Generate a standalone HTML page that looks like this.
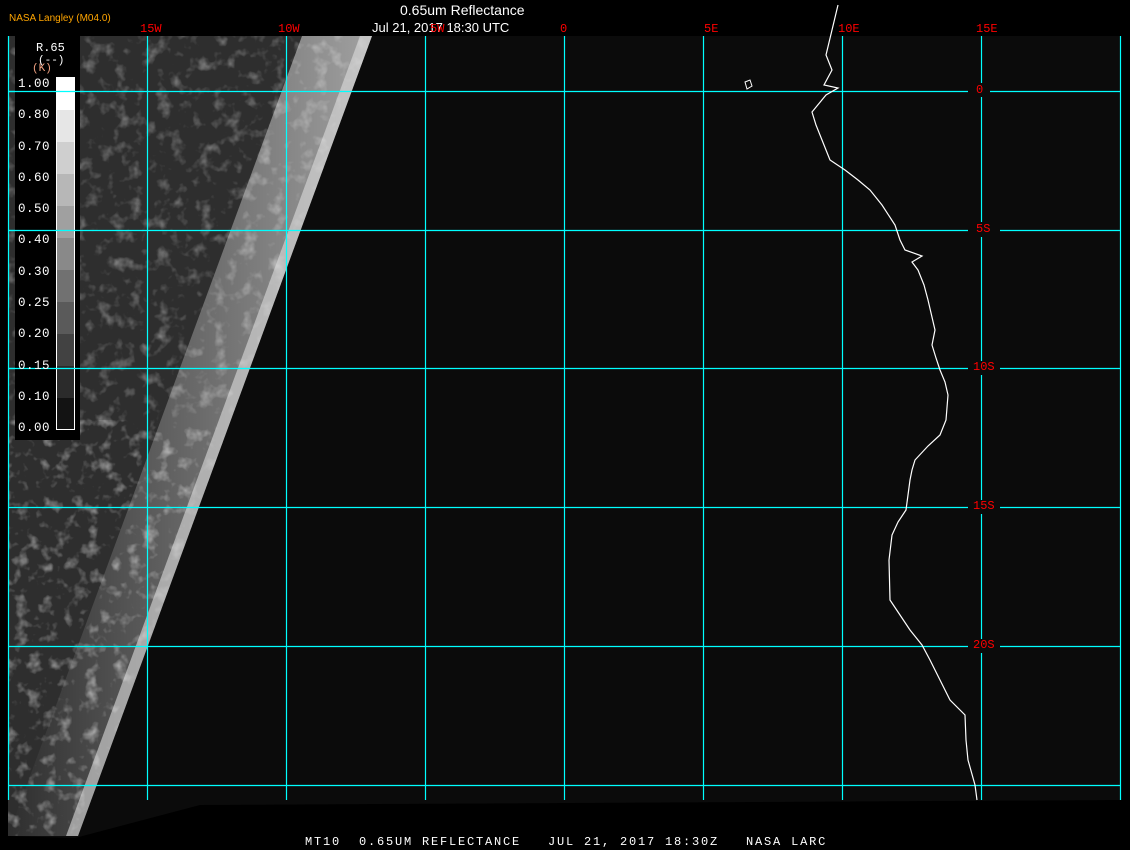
<!DOCTYPE html>
<html><head><style>
body{margin:0;background:#000;width:1130px;height:850px;overflow:hidden;position:relative;font-family:"Liberation Sans",sans-serif}
.t{position:absolute;white-space:nowrap}
.r{color:#f00;font-family:"Liberation Mono",monospace;font-size:12px}
</style></head><body>
<svg width="1130" height="850" style="position:absolute;left:0;top:0">
<defs>
<filter id="n" x="0" y="0" width="100%" height="100%">
<feTurbulence type="fractalNoise" baseFrequency="0.07" numOctaves="3" seed="4"/>
<feColorMatrix type="matrix" values="0 0 0 0 1  0 0 0 0 1  0 0 0 0 1  2 0 0 0 -1.05"/>
<feComposite in2="SourceGraphic" operator="in"/>
</filter>
<linearGradient id="e" x1="0" y1="0" x2="1" y2="0">
<stop offset="0" stop-color="#fff" stop-opacity="0"/><stop offset="1" stop-color="#fff" stop-opacity="0.55"/>
</linearGradient>
</defs>
<polygon points="8,36 1120,36 1120,800 200,805 75,838 8,836" fill="#0b0b0b"/>
<polygon points="8,36 372,36 78,836 8,836" fill="#2e2e2e"/>
<polygon points="8,36 372,36 78,836 8,836" fill="#fff" filter="url(#n)" opacity="0.5"/>
<polygon points="8,420 215,420 78,836 8,836" fill="#fff" filter="url(#n)" opacity="0.25"/>
<polygon points="372,36 78,836 8,836 302,36" fill="url(#e)"/>
<polygon points="372,36 78,836 66,836 360,36" fill="#ddd" opacity="0.6"/>
<g stroke="#00ffff" stroke-width="1.2">
<line x1="8.5" y1="36" x2="8.5" y2="800"/><line x1="147.5" y1="36" x2="147.5" y2="800"/><line x1="286.5" y1="36" x2="286.5" y2="800"/><line x1="425.5" y1="36" x2="425.5" y2="800"/><line x1="564.5" y1="36" x2="564.5" y2="800"/><line x1="703.5" y1="36" x2="703.5" y2="800"/><line x1="842.5" y1="36" x2="842.5" y2="800"/><line x1="981.5" y1="36" x2="981.5" y2="83"/><line x1="981.5" y1="97" x2="981.5" y2="222"/><line x1="981.5" y1="237" x2="981.5" y2="361"/><line x1="981.5" y1="375" x2="981.5" y2="500"/><line x1="981.5" y1="514" x2="981.5" y2="639"/><line x1="981.5" y1="653" x2="981.5" y2="800"/><line x1="1120.5" y1="36" x2="1120.5" y2="800"/>
<line x1="8" y1="91.5" x2="968" y2="91.5"/><line x1="990" y1="91.5" x2="1120" y2="91.5"/>
<line x1="8" y1="230.5" x2="968" y2="230.5"/><line x1="1000" y1="230.5" x2="1120" y2="230.5"/>
<line x1="8" y1="368.5" x2="968" y2="368.5"/><line x1="1000" y1="368.5" x2="1120" y2="368.5"/>
<line x1="8" y1="507.5" x2="968" y2="507.5"/><line x1="1000" y1="507.5" x2="1120" y2="507.5"/>
<line x1="8" y1="646.5" x2="968" y2="646.5"/><line x1="1000" y1="646.5" x2="1120" y2="646.5"/>
<line x1="8" y1="785.5" x2="1120" y2="785.5"/>
</g>
<polyline fill="none" stroke="#fff" stroke-width="1.2" points="838,5 832,30 826,55 832,70 824,85 838,88 826,95 812,112 816,125 822,140 830,160 845,170 858,180 870,190 882,205 895,225 900,240 905,250 922,256 912,262 918,270 924,285 928,300 935,330 932,345 936,358 940,370 945,382 948,395 946,420 940,435 928,446 915,460 912,470 910,480 908,495 906,510 898,522 892,535 889,560 890,600 900,615 910,630 922,645 930,660 940,680 950,700 965,715 966,740 968,760 975,785 977,800"/>
<polygon points="745,82 750,80 752,86 747,89" fill="none" stroke="#fff"/>
<rect x="15" y="36" width="65" height="404" fill="#000"/>
<g>
<rect x="56" y="77" width="19" height="33" fill="#fff"/>
<rect x="56" y="110" width="19" height="32" fill="#e6e6e6"/>
<rect x="56" y="142" width="19" height="32" fill="#cfcfcf"/>
<rect x="56" y="174" width="19" height="32" fill="#b7b7b7"/>
<rect x="56" y="206" width="19" height="32" fill="#a0a0a0"/>
<rect x="56" y="238" width="19" height="32" fill="#898989"/>
<rect x="56" y="270" width="19" height="32" fill="#717171"/>
<rect x="56" y="302" width="19" height="32" fill="#5a5a5a"/>
<rect x="56" y="334" width="19" height="32" fill="#424242"/>
<rect x="56" y="366" width="19" height="32" fill="#2b2b2b"/>
<rect x="56" y="398" width="19" height="32" fill="#131313"/>
<rect x="56.5" y="77.5" width="18" height="352" fill="none" stroke="#fff"/>
</g>
<g stroke="#00ffff" stroke-width="1.2"><line x1="8" y1="91.5" x2="80" y2="91.5"/><line x1="8" y1="230.5" x2="80" y2="230.5"/><line x1="8" y1="368.5" x2="80" y2="368.5"/></g>
</svg>
<div class="t" style="left:9px;top:13px;font-size:10px;color:#ffa500">NASA Langley (M04.0)</div>
<div class="t" style="left:400px;top:2px;font-size:14px;color:#fff">0.65um Reflectance</div>
<div class="t" style="left:372px;top:20px;font-size:13px;color:#fff">Jul 21, 2017 18:30 UTC</div>
<div class="t r" style="left:140px;top:22px">15W</div>
<div class="t r" style="left:278px;top:22px">10W</div>
<div class="t r" style="left:430px;top:22px">5W</div>
<div class="t r" style="left:560px;top:22px">0</div>
<div class="t r" style="left:704px;top:22px">5E</div>
<div class="t r" style="left:838px;top:22px">10E</div>
<div class="t r" style="left:976px;top:22px">15E</div>
<div class="t r" style="left:976px;top:83px">0</div>
<div class="t r" style="left:976px;top:222px">5S</div>
<div class="t r" style="left:973px;top:360px">10S</div>
<div class="t r" style="left:973px;top:499px">15S</div>
<div class="t r" style="left:973px;top:638px">20S</div>
<div class="t" style="left:36px;top:41px;font-family:'Liberation Mono',monospace;font-size:12px;color:#fff">R.65</div>
<div class="t" style="left:38px;top:55px;font-family:'Liberation Mono',monospace;font-size:11px;color:#fff">(--)</div>
<div class="t" style="left:32px;top:63px;font-family:'Liberation Mono',monospace;font-size:11px;color:#f0a080">(K)</div>
<div style="position:absolute;left:18px;top:69px;font-family:'Liberation Mono',monospace;font-size:12.5px;color:#fff;line-height:31.3px;letter-spacing:0.5px">1.00<br>0.80<br>0.70<br>0.60<br>0.50<br>0.40<br>0.30<br>0.25<br>0.20<br>0.15<br>0.10<br>0.00</div>
<div class="t" style="left:305px;top:835px;font-family:'Liberation Mono',monospace;font-size:12px;color:#fff;letter-spacing:1.8px;white-space:pre">MT10  0.65UM REFLECTANCE   JUL 21, 2017 18:30Z   NASA LARC</div>
</body></html>
